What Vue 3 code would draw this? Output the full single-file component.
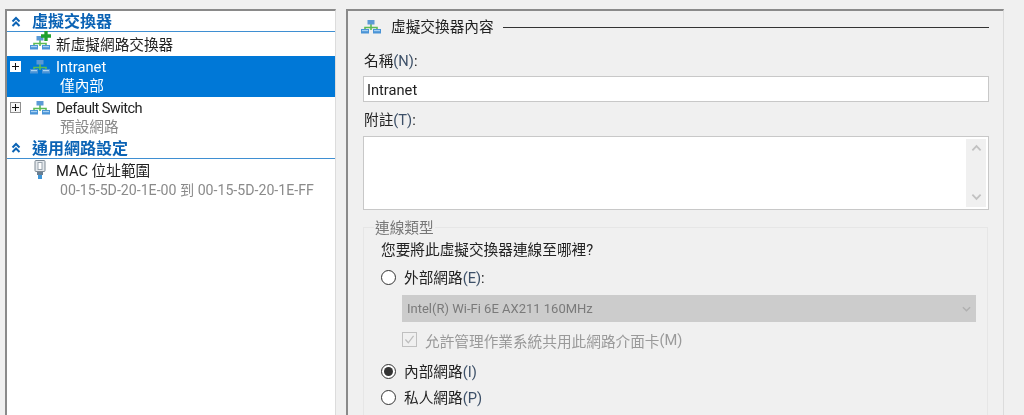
<script setup>
const chevronPath = 'M1.5 5.5 L5 2 L8.5 5.5 M1.5 10 L5 6.5 L8.5 10'
</script>

<template>
  <div class="page">
    <svg class="defs" width="0" height="0" aria-hidden="true">
      <symbol id="net" viewBox="0 0 20 14">
        <path d="M10 4v6M4 9V7.5h12V9" fill="none" stroke="#5cbb55" stroke-width="1.6" />
        <rect x="6.5" y="0" width="7" height="4.5" fill="#5a9ad6" />
        <rect x="0" y="9" width="8" height="4.5" fill="#4a94d6" />
        <rect x="12" y="9" width="8" height="4.5" fill="#4a94d6" />
        <rect x="1" y="10" width="6" height="1.2" fill="#a9d2f2" />
        <rect x="13" y="10" width="6" height="1.2" fill="#a9d2f2" />
      </symbol>
    </svg>

    <aside class="left">
      <div class="section">
        <svg class="chev" viewBox="0 0 10 12"><path :d="chevronPath" /></svg>
        <span>虛擬交換器</span>
      </div>
      <div class="row new">
        <span class="gutter"></span>
        <span class="icon-wrap">
          <svg class="net" viewBox="0 0 20 14"><use href="#net" /></svg>
          <svg class="plus-green" viewBox="0 0 9 9"><path d="M3 0h3v3h3v3H6v3H3V6H0V3h3z" /></svg>
        </span>
        <span class="title">新虛擬網路交換器</span>
      </div>
      <div class="row two selected">
        <div class="line">
          <span class="gutter"><span class="exp on"></span></span>
          <svg class="net" viewBox="0 0 20 14"><use href="#net" /></svg>
          <span class="title">Intranet</span>
        </div>
        <div class="sub">僅內部</div>
      </div>
      <div class="row two">
        <div class="line">
          <span class="gutter"><span class="exp"></span></span>
          <svg class="net" viewBox="0 0 20 14"><use href="#net" /></svg>
          <span class="title tight">Default Switch</span>
        </div>
        <div class="sub grey">預設網路</div>
      </div>
      <div class="section second">
        <svg class="chev" viewBox="0 0 10 12"><path :d="chevronPath" /></svg>
        <span>通用網路設定</span>
      </div>
      <div class="row two">
        <div class="line">
          <span class="gutter"></span>
          <svg class="plug" viewBox="0 0 12 20">
            <rect x="1" y="0.5" width="10" height="11" rx="1" fill="#e4e8ec" stroke="#7f8a94" />
            <rect x="4" y="2.5" width="4" height="7" fill="#fff" stroke="#9aa4ad" />
            <rect x="3" y="12" width="6" height="3" fill="#6a7f92" />
            <rect x="4" y="15" width="4" height="4" fill="#3d95d8" />
          </svg>
          <span class="title mac">MAC 位址範圍</span>
        </div>
        <div class="sub grey small">00-15-5D-20-1E-00 到 00-15-5D-20-1E-FF</div>
      </div>
    </aside>

    <main class="right">
      <div class="heading">
        <svg class="net" viewBox="0 0 20 14"><use href="#net" /></svg>
        <span>虛擬交換器內容</span>
        <i class="rule"></i>
      </div>

      <label class="label l-name">名稱<u>(N)</u>:</label>
      <div class="input">Intranet</div>

      <label class="label l-note">附註<u>(T)</u>:</label>
      <div class="textarea">
        <div class="scroll">
          <svg viewBox="0 0 12 8"><path d="M1.5 6.5 L6 2 L10.5 6.5" /></svg>
          <svg viewBox="0 0 12 8"><path d="M1.5 1.5 L6 6 L10.5 1.5" /></svg>
        </div>
      </div>

      <section class="group">
        <span class="legend">連線類型</span>
        <p class="question">您要將此虛擬交換器連線至哪裡?</p>

        <div class="radio r-ext"><span class="dot"></span>外部網路<u>(E)</u>:</div>
        <div class="select">
          <span>Intel(R) Wi-Fi 6E AX211 160MHz</span>
          <svg viewBox="0 0 10 6"><path d="M1 1 L5 5 L9 1" /></svg>
        </div>
        <div class="check">
          <span class="box">
            <svg viewBox="0 0 16 16"><path d="M3 8 L6.5 12 L13 3.5" /></svg>
          </span>
          允許管理作業系統共用此網路介面卡<u>(M)</u>
        </div>
        <div class="radio r-int"><span class="dot on"></span>內部網路<u>(I)</u></div>
        <div class="radio r-pri"><span class="dot"></span>私人網路<u>(P)</u></div>
      </section>
    </main>
  </div>
</template>

<style>
html, body { margin: 0; background: #f0f0f0; }
</style>

<style scoped>
.page {
  width: 1024px;
  height: 415px;
  overflow: hidden;
  box-sizing: border-box;
  background: #f0f0f0;
  padding: 9px 20px 0 5px;
  display: flex;
  gap: 10px;
  font-family: Roboto, "Noto Sans CJK TC", sans-serif;
  font-size: 14.67px;
  color: #222;
  filter: blur(0.35px);
}
.defs { position: absolute; }
u { text-decoration: none; color: #3d5068; }

.left {
  width: 331px;
  flex: none;
  box-sizing: border-box;
  height: 420px;
  background: #fff;
  border-top: 2px solid #8a8a8a;
  border-left: 2px solid #8a8a8a;
  border-right: 1px solid #dcdcdc;
}
.section {
  height: 19px;
  border-bottom: 1px solid #3f8fd2;
  display: flex;
  align-items: center;
  color: #0b63b5;
  font-weight: 700;
  font-size: 16px;
  padding-left: 4px;
  gap: 11px;
  margin-top: 1px;
  line-height: 17px;
}
.section.second { height: 20px; margin-top: 0; }
.chev { width: 10px; height: 12px; fill: none; stroke: #0b63b5; stroke-width: 2; }
.row { display: flex; align-items: center; height: 24px; }
.row.two { display: block; height: 41px; }
.gutter { width: 23px; flex: none; display: flex; align-items: center; padding-left: 3px; box-sizing: border-box; }
.line { display: flex; align-items: center; height: 21px; }
.net { width: 20px; height: 14px; flex: none; display: block; }
.icon-wrap { position: relative; width: 20px; height: 14px; flex: none; margin-top: -2px; }
.plus-green { position: absolute; right: -1px; top: -5px; width: 10px; height: 10px; fill: #1fa02e; }
.plug { width: 12px; height: 20px; flex: none; margin: 0 4px; }
.title { margin-left: 6px; white-space: nowrap; line-height: 18px; }
.row.new .title, .title.mac { padding-top: 2px; }
.title.tight { letter-spacing: -0.6px; }
.sub { padding-left: 53px; line-height: 18px; }
.sub.grey { color: #8a8a8a; }
.sub.small { white-space: nowrap; line-height: 20px; font-size: 14.17px; }
.selected { background: #0078d7; color: #fff; }
.selected .sub { color: #fff; }
.exp {
  width: 11px;
  height: 11px;
  box-sizing: border-box;
  border: 1px solid #8f8f8f;
  background:
    linear-gradient(#111, #111) center / 7px 1px no-repeat,
    linear-gradient(#111, #111) center / 1px 7px no-repeat,
    #f6f6f6;
}
.exp.on { border-color: #fff; background-color: #fff; }

.right {
  flex: 1;
  box-sizing: border-box;
  height: 420px;
  border-top: 2px solid #8a8a8a;
  border-left: 2px solid #8a8a8a;
  border-right: 1px solid #dcdcdc;
  padding: 0 14px 0 15px;
}
.heading {
  display: flex;
  align-items: center;
  height: 16px;
  margin-top: 8px;
  line-height: 16px;
}
.heading span { margin-left: 10px; margin-right: 9px; white-space: nowrap; }
.heading .net { margin-left: -2px; }
.rule { flex: 1; height: 1px; background: #333; }
.label { display: block; line-height: 20px; margin-left: 1px; }
.l-name { margin-top: 16px; }
.l-note { margin-top: 8px; }
.input {
  margin-top: 5px;
  height: 26px;
  box-sizing: border-box;
  border: 1px solid #c8c8c8;
  background: #fff;
  padding-left: 3px;
  line-height: 26px;
}
.textarea {
  margin-top: 6px;
  height: 74px;
  box-sizing: border-box;
  border: 1px solid #c8c8c8;
  background: #fff;
  display: flex;
  justify-content: flex-end;
  padding: 2px;
}
.scroll {
  width: 20px;
  background: #f0f0f0;
  display: flex;
  flex-direction: column;
  justify-content: space-between;
  align-items: center;
  padding: 5px 0 6px;
}
.scroll svg { width: 11px; height: 8px; fill: none; stroke: #c2c2c2; stroke-width: 2; }
.group {
  position: relative;
  margin-top: 17px;
  margin-right: 1px;
  height: 200px;
  box-sizing: border-box;
  border: 1px solid #e6e6e6;
  padding-left: 17px;
}
.legend {
  position: absolute;
  top: -9px;
  left: 10px;
  padding: 0 1px;
  background: #f0f0f0;
  color: #777;
  line-height: 18px;
}
.question { margin: 12px 0 0; line-height: 20px; white-space: nowrap; }
.radio {
  display: flex;
  align-items: center;
  line-height: 20px;
  height: 20px;
  box-sizing: border-box;
  padding-top: 2px;
  white-space: nowrap;
}
.dot {
  width: 15px;
  height: 15px;
  box-sizing: border-box;
  border: 1px solid #333;
  border-radius: 50%;
  background: #fff;
  margin-right: 8px;
  margin-top: -2px;
  flex: none;
  display: flex;
  align-items: center;
  justify-content: center;
}
.dot.on::after { content: ""; width: 9px; height: 9px; border-radius: 50%; background: #333; }
.r-ext { margin-top: 7px; }
.r-int { margin-top: 13px; }
.r-pri { margin-top: 6px; }
.select {
  margin: 8px 11px 0 21px;
  height: 27px;
  background: #ccc;
  color: #7a7a7a;
  font-size: 13px;
  display: flex;
  align-items: center;
  justify-content: space-between;
  padding: 0 5px 0 5px;
}
.select svg { width: 9px; height: 6px; fill: none; stroke: #b0b0b0; stroke-width: 1.6; }
.check {
  margin: 8px 0 0 21px;
  display: flex;
  align-items: center;
  height: 18px;
  box-sizing: border-box;
  padding-top: 2px;
  color: #9a9a9a;
  white-space: nowrap;
}
.check u { color: #9a9a9a; }
.box {
  width: 15px;
  height: 15px;
  box-sizing: border-box;
  border: 1px solid #c0c0c0;
  margin-right: 8px;
  margin-top: -2px;
  flex: none;
  display: flex;
}
.box svg { width: 13px; height: 13px; fill: none; stroke: #bdbdbd; stroke-width: 1.5; }
</style>
